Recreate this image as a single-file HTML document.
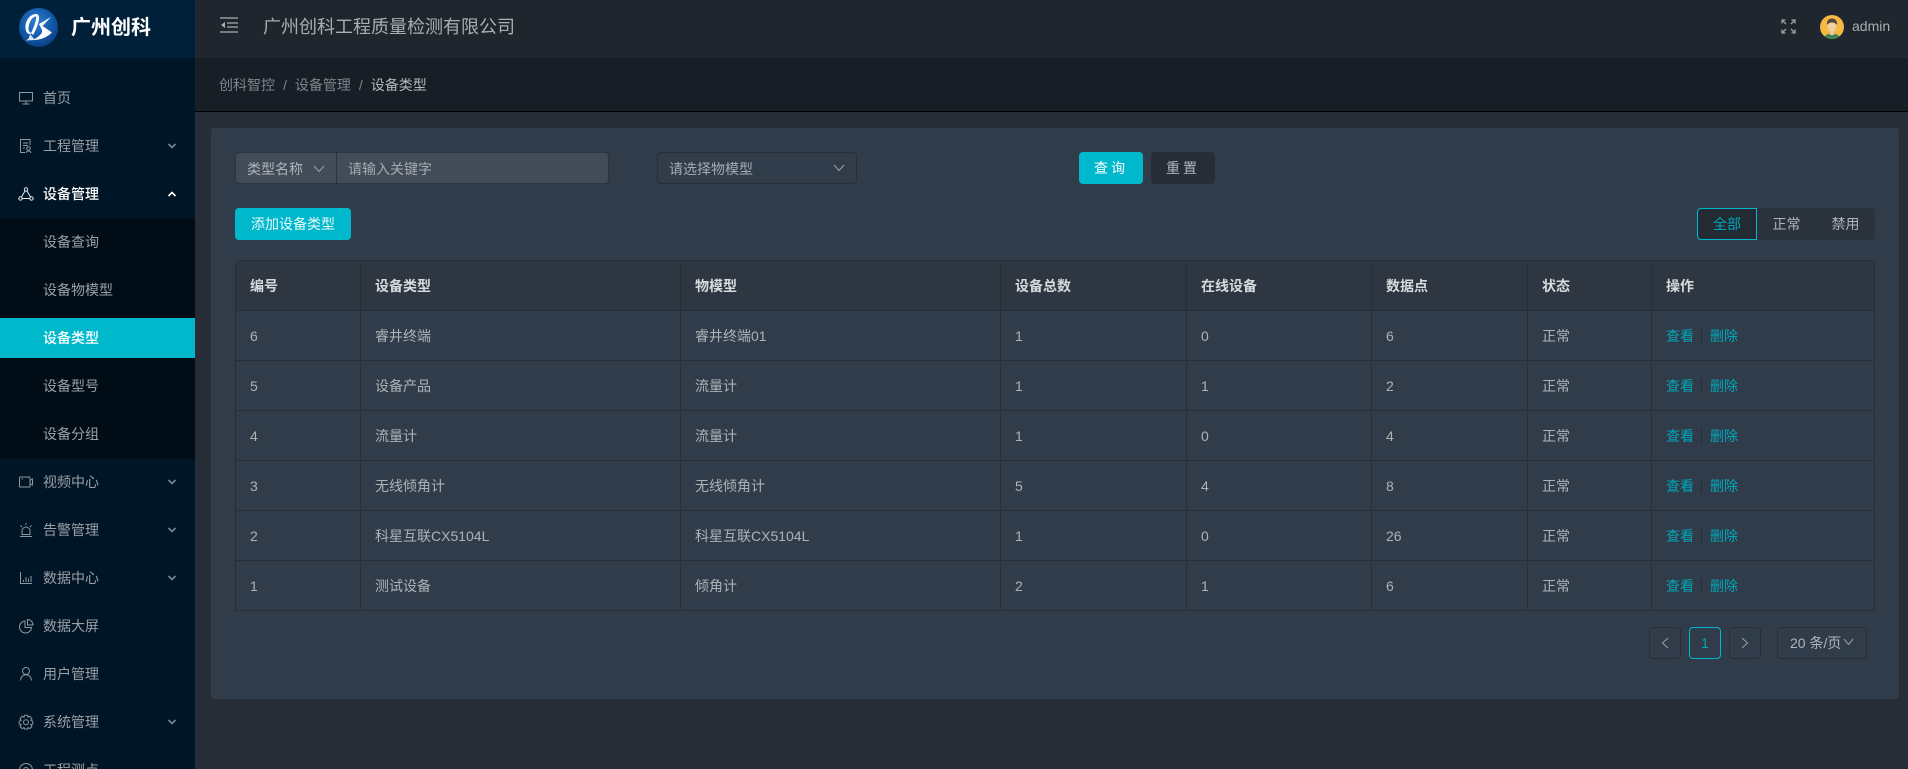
<!DOCTYPE html>
<html lang="zh">
<head>
<meta charset="utf-8">
<title>设备类型</title>
<style>
*{box-sizing:border-box;margin:0;padding:0}
html,body{width:1908px;height:769px;overflow:hidden;background:#272d36}
body{position:relative;font-family:"Liberation Sans","Noto Sans CJK SC",sans-serif;font-size:14px;color:#b0b5bb}
.a{position:absolute}
#side{left:0;top:0;width:195px;height:769px;background:#001526;overflow:hidden}
#logo{left:0;top:0;width:195px;height:58px;background:#00203a}
#logo b{position:absolute;left:71px;top:14px;font-size:20px;line-height:28px;color:#fff;font-weight:700}
#sub{left:0;top:218px;width:195px;height:240px;background:#000d17}
#hl{left:0;top:318px;width:195px;height:40px;background:#00b8cc}
.m{position:absolute;left:43px;line-height:20px;color:#9aa0a6;white-space:nowrap}
.m.on{color:#fff;font-weight:500}
.ic{position:absolute;left:18px;width:16px;height:16px;fill:none;stroke:#8f969d;stroke-width:1;overflow:visible}
.ch{position:absolute;left:167px;width:10px;height:6px;fill:none;stroke:#7f878f;stroke-width:1.6}
#top{left:195px;top:0;width:1713px;height:58px;background:#1f262e}
#crumb{left:195px;top:58px;width:1713px;height:54px;background:#181e26;border-bottom:1px solid #000}
#panel{left:211px;top:128px;width:1688px;height:571px;background:#313c4a;border-radius:3px}
table{position:absolute;left:235px;top:260px;width:1640px;border-collapse:separate;border-spacing:0;table-layout:fixed;border-top:1px solid #262e37;border-left:1px solid #262e37;border-radius:4px 4px 0 0}
th,td{height:50px;padding:0 0 0 14px;text-align:left;border-right:1px solid #262e37;border-bottom:1px solid #262e37;font-size:14px;white-space:nowrap;font-weight:400;color:#adb2b7}
th{background:#2d3641;color:#d8dbde;font-weight:700}
td a{color:#00a8ba}
td i{display:inline-block;width:1px;height:14px;background:#252c35;margin:0 8px 0 7px;vertical-align:-2px}
.pg{position:absolute;top:627px;height:32px;border:1px solid #262e37;border-radius:4px;text-align:center;line-height:30px;color:#b0b5bb}
.btn{position:absolute;top:152px;height:32px;border-radius:4px;text-align:center;line-height:32px}
</style>
</head>
<body>

<div id="side" class="a">
  <div id="logo" class="a">
    <svg class="a" style="left:19px;top:8px" width="40" height="40" viewBox="0 0 40 40">
      <defs><radialGradient id="g" cx=".45" cy=".35" r=".7"><stop offset="0" stop-color="#2f7fd0"/><stop offset=".6" stop-color="#1258a8"/><stop offset="1" stop-color="#083a7c"/></radialGradient></defs>
      <circle cx="19.500" cy="19.500" r="19.500" fill="url(#g)"/>
      <path d="M17 6C11 6 6 13 6.500 20C6.800 24 8.500 26 11 26C11.500 26 12 25.500 12.500 25C9.500 24.500 9 21 10 17C11 12.500 14 9 16 8.500C17 8.300 17.500 9 17 11C16.500 14.500 15 19 12 25L14 27C17.500 21 20 14 20 10C20 7.500 19 6 17 6Z" fill="#fff"/>
      <path d="M11 26L16 32L7 32.500L10 30Z" fill="#fff" opacity=".85"/>
      <path d="M32 9L20 16L22.500 21C24.500 24 22 27.500 14 32C22 32 28 29 33 24.500L23.500 18Z" fill="#fff"/>
    </svg>
    <b>广州创科</b>
  </div>

  <div id="sub" class="a"></div>
  <div id="hl" class="a"></div>

  <!-- monitor -->
  <svg class="ic" style="top:90px" viewBox="0 0 16 16"><rect x="1.500" y="2.500" width="13" height="8.500"/><path d="M8 11V14M4.500 14H11.500"/></svg>
  <div class="m" style="top:88px">首页</div>

  <!-- doc -->
  <svg class="ic" style="top:138px" viewBox="0 0 16 16"><path d="M12 7V1.500H2.500V14.500H7M5 5H10M5 7.500H10M5 10H7"/><circle cx="10.500" cy="10.500" r="1.800"/><path d="M8 15C8.300 13.500 9.200 13 10.500 13S12.700 13.500 13 15"/></svg>
  <div class="m" style="top:136px">工程管理</div>
  <svg class="ch" style="top:143px" viewBox="0 0 10 6"><path d="M1.500 1L5 4.500L8.500 1"/></svg>

  <!-- network -->
  <svg class="ic" style="top:186px;stroke:#e6e8ea" viewBox="0 0 16 16"><circle cx="8" cy="3.500" r="1.700"/><circle cx="2.500" cy="12.500" r="1.700"/><circle cx="13.500" cy="12.500" r="1.700"/><path d="M7 5L3.500 11M9 5L12.500 11M4.200 12.500H11.800"/></svg>
  <div class="m on" style="top:184px">设备管理</div>
  <svg class="ch" style="top:191px;stroke:#fff" viewBox="0 0 10 6"><path d="M1.500 5L5 1.500L8.500 5"/></svg>

  <div class="m" style="top:232px">设备查询</div>
  <div class="m" style="top:280px">设备物模型</div>
  <div class="m on" style="top:328px">设备类型</div>
  <div class="m" style="top:376px">设备型号</div>
  <div class="m" style="top:424px">设备分组</div>

  <!-- video -->
  <svg class="ic" style="top:474px" viewBox="0 0 16 16"><rect x="1.500" y="3" width="10.500" height="10" rx=".8"/><path d="M3.500 5H5M12 6.500L14.500 5V11L12 9.500"/></svg>
  <div class="m" style="top:472px">视频中心</div>
  <svg class="ch" style="top:479px" viewBox="0 0 10 6"><path d="M1.500 1L5 4.500L8.500 1"/></svg>

  <!-- alarm -->
  <svg class="ic" style="top:522px" viewBox="0 0 16 16"><path d="M4 12.500V9A4 4 0 0 1 12 9V12.500M2 14.500H14M3.500 12.500H12.500M8 1V3M2.500 3.500L4 5M13.500 3.500L12 5"/></svg>
  <div class="m" style="top:520px">告警管理</div>
  <svg class="ch" style="top:527px" viewBox="0 0 10 6"><path d="M1.500 1L5 4.500L8.500 1"/></svg>

  <!-- chart -->
  <svg class="ic" style="top:570px" viewBox="0 0 16 16"><path d="M2.500 2V13.500H14M5.500 12V10M8 12V7M10.500 12V8.500M13 12V6"/></svg>
  <div class="m" style="top:568px">数据中心</div>
  <svg class="ch" style="top:575px" viewBox="0 0 10 6"><path d="M1.500 1L5 4.500L8.500 1"/></svg>

  <!-- pie -->
  <svg class="ic" style="top:618px" viewBox="0 0 16 16"><path d="M7 3A6 6 0 1 0 13.500 9.500H7Z"/><path d="M9.500 1.500A5.500 5.500 0 0 1 15 7H9.500Z"/></svg>
  <div class="m" style="top:616px">数据大屏</div>

  <!-- user -->
  <svg class="ic" style="top:666px" viewBox="0 0 16 16"><circle cx="8" cy="5" r="3.500"/><path d="M2.500 14.500C2.800 11 5 8.800 8 8.800S13.200 11 13.500 14.500"/></svg>
  <div class="m" style="top:664px">用户管理</div>

  <!-- gear -->
  <svg class="ic" style="top:714px" viewBox="0 0 16 16"><path d="M6.500 1.300H9.500L10 3.200L11.800 2.200L14 4.800L12.800 6.400L14.800 7.200V10L12.800 10.600L14 12.400L11.800 14.600L10 13.600L9.500 15H6.500L6 13.600L4.200 14.600L2 12.400L3.200 10.600L1.200 10V7.200L3.200 6.400L2 4.800L4.200 2.200L6 3.200Z"/><circle cx="8" cy="8.300" r="2.500"/></svg>
  <div class="m" style="top:712px">系统管理</div>
  <svg class="ch" style="top:719px" viewBox="0 0 10 6"><path d="M1.500 1L5 4.500L8.500 1"/></svg>

  <!-- last -->
  <svg class="ic" style="top:762px" viewBox="0 0 16 16"><circle cx="8" cy="8" r="6.500"/><circle cx="8" cy="8" r="2.500"/></svg>
  <div class="m" style="top:760px">工程测点</div>
</div>

<div id="top" class="a"></div>
<svg class="a" style="left:220px;top:17px;fill:none;stroke:#a9aeb4;stroke-width:1.300" width="18" height="16" viewBox="0 0 18 16"><path d="M0 1H18M7 6H18M7 10H18M0 15H18"/><path d="M5 5V11L1 8Z" fill="#a9aeb4" stroke="none"/></svg>
<div class="a" style="left:263px;top:14px;font-size:18px;line-height:26px;color:#a9aeb4;white-space:nowrap">广州创科工程质量检测有限公司</div>

<svg class="a" style="left:1781px;top:19px;fill:none;stroke:#9aa0a6;stroke-width:1.300" width="15" height="15" viewBox="0 0 15 15"><path d="M1 4.500V1H4.500M1 1L5 5M10.500 1H14V4.500M14 1L10 5M1 10.500V14H4.500M1 14L5 10M14 10.500V14H10.500M14 14L10 10"/></svg>
<svg class="a" style="left:1820px;top:15px" width="24" height="24" viewBox="0 0 24 24">
  <defs><clipPath id="av"><circle cx="12" cy="12" r="12"/></clipPath></defs>
  <g clip-path="url(#av)">
    <rect width="24" height="24" fill="#f4b942"/>
    <path d="M4 24C4 20 8 18.500 12 18.500S20 20 20 24Z" fill="#3f8159"/>
    <rect x="9.800" y="14" width="4.400" height="6" fill="#f0c79a"/>
    <ellipse cx="12" cy="11" rx="4.500" ry="5.500" fill="#f3cfa6"/>
    <path d="M7 10C6.500 5.500 9 3.500 12 3.500S17.500 5.500 17 10C15.500 8 14 7.500 12 7.500S8.500 8 7 10Z" fill="#57423a"/>
  </g>
</svg>
<div class="a" style="left:1852px;top:16px;line-height:20px;color:#a9aeb4">admin</div>

<div id="crumb" class="a"></div>
<div class="a" style="left:219px;top:75px;line-height:20px;color:#7f858c;white-space:nowrap">创科智控<span style="margin:0 8px;color:#7f858c">/</span>设备管理<span style="margin:0 8px;color:#7f858c">/</span><span style="color:#b4b8bd">设备类型</span></div>

<div id="panel" class="a"></div>

<!-- filter -->
<div class="a" style="left:235px;top:152px;width:374px;height:32px;background:#424c58;border:1px solid #2b343e;border-radius:4px"></div>
<div class="a" style="left:336px;top:153px;width:1px;height:30px;background:#2b343e"></div>
<div class="a" style="left:247px;top:159px;line-height:20px;color:#b0b5bb">类型名称</div>
<svg class="a" style="left:313px;top:165px;fill:none;stroke:#9aa1a8" width="12" height="8" viewBox="0 0 12 8"><path d="M1 1L6 6.500L11 1"/></svg>
<div class="a" style="left:348px;top:159px;line-height:20px;color:#a5aab0">请输入关键字</div>

<div class="a" style="left:657px;top:152px;width:200px;height:32px;border:1px solid #262e38;border-radius:4px"></div>
<div class="a" style="left:669px;top:159px;line-height:20px;color:#a5aab0">请选择物模型</div>
<svg class="a" style="left:833px;top:164px;fill:none;stroke:#9aa1a8" width="12" height="8" viewBox="0 0 12 8"><path d="M1 1L6 6.500L11 1"/></svg>

<div class="btn" style="left:1079px;width:64px;background:#00b8cc;color:#fff;letter-spacing:3px">查询</div>
<div class="btn" style="left:1151px;width:64px;background:#262d37;color:#b0b5bb;letter-spacing:3px">重置</div>

<div class="a" style="left:235px;top:208px;width:116px;height:32px;background:#00b8cc;border-radius:4px;color:#e8fafc;text-align:center;line-height:32px">添加设备类型</div>

<!-- tabs -->
<div class="a" style="left:1697px;top:208px;width:178px;height:32px;background:#2a323c;border-radius:4px"></div>
<div class="a" style="left:1697px;top:208px;width:60px;height:32px;background:#222a33;border:1px solid #00b8cc;border-radius:4px 0 0 4px;color:#00a8ba;text-align:center;line-height:30px">全部</div>
<div class="a" style="left:1757px;top:208px;width:59px;line-height:32px;text-align:center;color:#b0b5bb">正常</div>
<div class="a" style="left:1816px;top:208px;width:59px;line-height:32px;text-align:center;color:#b0b5bb">禁用</div>

<!-- table -->
<table>
<colgroup><col style="width:125px"><col style="width:320px"><col style="width:320px"><col style="width:186px"><col style="width:185px"><col style="width:156px"><col style="width:124px"><col style="width:223px"></colgroup>
<tr><th>编号</th><th>设备类型</th><th>物模型</th><th>设备总数</th><th>在线设备</th><th>数据点</th><th>状态</th><th>操作</th></tr>
<tr><td>6</td><td>睿井终端</td><td>睿井终端01</td><td>1</td><td>0</td><td>6</td><td>正常</td><td><a>查看</a><i></i><a>删除</a></td></tr>
<tr><td>5</td><td>设备产品</td><td>流量计</td><td>1</td><td>1</td><td>2</td><td>正常</td><td><a>查看</a><i></i><a>删除</a></td></tr>
<tr><td>4</td><td>流量计</td><td>流量计</td><td>1</td><td>0</td><td>4</td><td>正常</td><td><a>查看</a><i></i><a>删除</a></td></tr>
<tr><td>3</td><td>无线倾角计</td><td>无线倾角计</td><td>5</td><td>4</td><td>8</td><td>正常</td><td><a>查看</a><i></i><a>删除</a></td></tr>
<tr><td>2</td><td>科星互联CX5104L</td><td>科星互联CX5104L</td><td>1</td><td>0</td><td>26</td><td>正常</td><td><a>查看</a><i></i><a>删除</a></td></tr>
<tr><td>1</td><td>测试设备</td><td>倾角计</td><td>2</td><td>1</td><td>6</td><td>正常</td><td><a>查看</a><i></i><a>删除</a></td></tr>
</table>

<!-- pagination -->
<div class="pg" style="left:1649px;width:32px"><svg style="margin-top:9px;fill:none;stroke:#9aa1a8" width="8" height="12" viewBox="0 0 8 12"><path d="M7 1L1.500 6L7 11"/></svg></div>
<div class="pg" style="left:1689px;width:32px;border-color:#00b8cc;color:#00a8ba">1</div>
<div class="pg" style="left:1729px;width:32px"><svg style="margin-top:9px;fill:none;stroke:#9aa1a8" width="8" height="12" viewBox="0 0 8 12"><path d="M1 1L6.500 6L1 11"/></svg></div>
<div class="pg" style="left:1777px;width:90px;text-align:left;padding-left:12px;white-space:nowrap">20 条/页</div>
<svg class="a" style="left:1843px;top:638px;fill:none;stroke:#9aa1a8" width="11" height="8" viewBox="0 0 11 8"><path d="M1 1L5.500 6.500L10 1"/></svg>

</body>
</html>
